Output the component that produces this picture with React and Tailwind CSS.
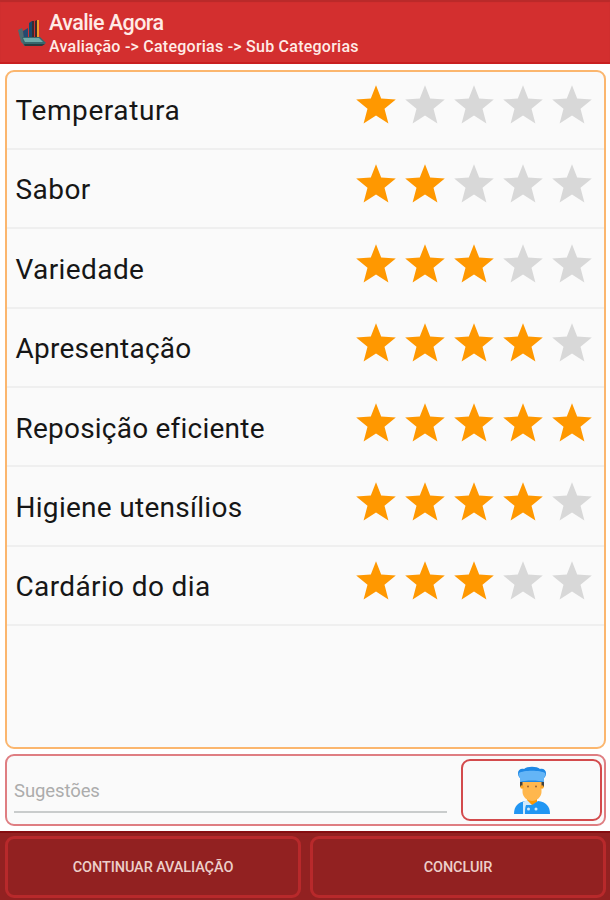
import { useState } from "react";

const CATEGORIES = [
  { name: "Temperatura", rating: 1, tracking: "tracking-[0.6px]" },
  { name: "Sabor", rating: 2, tracking: "tracking-[0.45px]" },
  { name: "Variedade", rating: 3, tracking: "tracking-[0.4px]" },
  { name: "Apresentação", rating: 4, tracking: "tracking-[0.25px]" },
  { name: "Reposição eficiente", rating: 5, tracking: "tracking-[0.22px]" },
  { name: "Higiene utensílios", rating: 4, tracking: "tracking-[0.29px]" },
  { name: "Cardário do dia", rating: 3, tracking: "tracking-[0.37px]" },
];

function Logo() {
  return (
    <svg viewBox="0 0 30 30" className="w-[30px] h-[30px] flex-shrink-0">
      <path d="M0 12l4-2 3 10-1 7-3-3z" fill="#4e6b70" />
      <path d="M5 13l5-3v11H6z" fill="#244a70" />
      <path d="M11 5l3-2v17h-3z" fill="#17496d" />
      <path d="M14 3h2v17h-2z" fill="#3b2a30" />
      <path d="M17 3l2-1v18h-2z" fill="#3b2a2c" />
      <path d="M19 2h2v18h-2z" fill="#f09a2c" />
      <path d="M4 19h18l6 6-5 3H6z" fill="#37686d" />
      <path d="M5 20h16l4 4H7z" fill="#70aaa9" />
      <path d="M6 26h21l-3 2H7z" fill="#293c40" />
    </svg>
  );
}

function Star({ filled }) {
  return (
    <svg viewBox="0 0 40 39" className="w-10 h-[39px]">
      <path
        d="M20 0.2l5.2 13.4 14.600.9-11.300 9.200 3.900 14.700L20 30.600 7.600 38.400l3.900-14.700-11.300-9.200 14.600-.9z"
        className={filled ? "fill-[#ff9800]" : "fill-[#d8d8d8]"}
      />
    </svg>
  );
}

function Chef() {
  return (
    <svg viewBox="0 0 36 48" className="w-9 h-12">
      <path d="M6 14h24v7H6z" fill="#424242" />
      <path d="M13 30h10v6l-5 4-5-4z" fill="#ff9800" />
      <path d="M8.500 15h19v11c0 5-5 9-9.500 9s-9.500-4-9.500-9z" fill="#ffb74d" />
      <circle cx="8" cy="21" r="1.800" fill="#ffa726" />
      <circle cx="28" cy="21" r="1.800" fill="#ffa726" />
      <circle cx="14" cy="20.500" r="1" fill="#9a6030" />
      <circle cx="22" cy="20.500" r="1" fill="#9a6030" />
      <path d="M4 7c0-3 3-5 6-4 3-3 13-3 16 0 3-1 6 1 6 4s-1 4-2 5v4H6v-4c-1-1-2-2-2-5z" fill="#1e88e5" />
      <path d="M5 7c4-3 22-3 26 0 1 3-1 4-1 5v4c-5-2-19-2-24 0v-4c0-1-2-2-1-5z" fill="#64b5f6" />
      <path d="M0 48c0-8 4-12 12-13l6 4 6-4c8 1 12 5 12 13z" fill="#2196f3" />
      <path d="M9 36l4-2 5 5h-6c-1 3-1 5-1 9H9z" fill="#d2eafb" />
      <circle cx="14.500" cy="43" r="1.500" fill="#d2eafb" />
      <circle cx="22" cy="43" r="1.500" fill="#d2eafb" />
    </svg>
  );
}

function Category({ name, rating, tracking, onRate }) {
  return (
    <li className="flex h-[79.4px] justify-between border-b-2 border-[#efefef] pl-[8.5px] pr-[12px]">
      <span className={`mt-[23.5px] text-[28px] leading-[34px] text-[#161616] ${tracking}`}>{name}</span>
      <div className="mt-[14.5px] flex gap-[9px]">
        {[1, 2, 3, 4, 5].map((n) => (
          <button key={n} onClick={() => onRate(n)} aria-label={`${name} ${n}`} className="h-[39px]">
            <Star filled={n <= rating} />
          </button>
        ))}
      </div>
    </li>
  );
}

export default function App() {
  const [ratings, setRatings] = useState(CATEGORIES.map((c) => c.rating));

  const rate = (index, value) => setRatings(ratings.map((r, i) => (i === index ? value : r)));

  return (
    <div className="flex h-[900px] w-[610px] flex-col overflow-hidden bg-white font-['Roboto',sans-serif]">
      <header className="flex h-16 flex-shrink-0 border-b-2 border-[#c91f20] bg-[#d32f2f] pl-[18px] pt-[10px] text-[#ffebe6] shadow-[inset_0_2px_1px_#b92a2a]">
        <div className="mt-[8px]">
          <Logo />
        </div>
        <div className="ml-px">
          <h1 className="text-[21.5px] font-medium leading-[25px] tracking-[-0.55px]">Avalie Agora</h1>
          <p className="text-[16px] font-medium leading-[23px] tracking-[0.24px]">
            Avaliação -&gt; Categorias -&gt; Sub Categorias
          </p>
        </div>
      </header>

      <div className="ml-[5px] mr-[4px] mt-[6px] h-[679px] flex-shrink-0 rounded-[9px] border-2 border-[#fbb66e] bg-[#fafafa]">
        {/* the list starts slightly under the frame */}
        <ul className="-mt-[1.5px]">
          {CATEGORIES.map((category, i) => (
            <Category key={category.name} {...category} rating={ratings[i]} onRate={(n) => rate(i, n)} />
          ))}
        </ul>
      </div>

      <section className="ml-[5px] mr-[4px] mt-[5px] flex h-[72px] flex-shrink-0 rounded-[9px] border-2 border-[#df7e82] bg-[#fafafa]">
        <input
          placeholder="Sugestões"
          className="ml-[7px] mt-[15px] h-[42px] w-[433px] border-b-2 border-[#c9cccc] text-[18.5px] tracking-[-0.1px] outline-none placeholder:text-[#acacac]"
        />
        <button className="ml-[14px] mt-[3px] flex h-[62px] w-[141px] items-center justify-center rounded-[9px] border-2 border-[#d34a4c]">
          <Chef />
        </button>
      </section>

      <footer className="mt-[5px] flex flex-1 gap-[9px] border-t-2 border-[#850d10] bg-[#922121] pl-[5px] pr-[4px] pt-[3px] text-[14.5px] font-medium tracking-[-0.1px] text-[#edcfca]">
        <button className="h-[62px] flex-1 rounded-[9px] border-[3px] border-[#b8292b] pt-[2px]">CONTINUAR AVALIAÇÃO</button>
        <button className="h-[62px] flex-1 rounded-[9px] border-[3px] border-[#b8292b] pt-[2px]">CONCLUIR</button>
      </footer>
    </div>
  );
}
